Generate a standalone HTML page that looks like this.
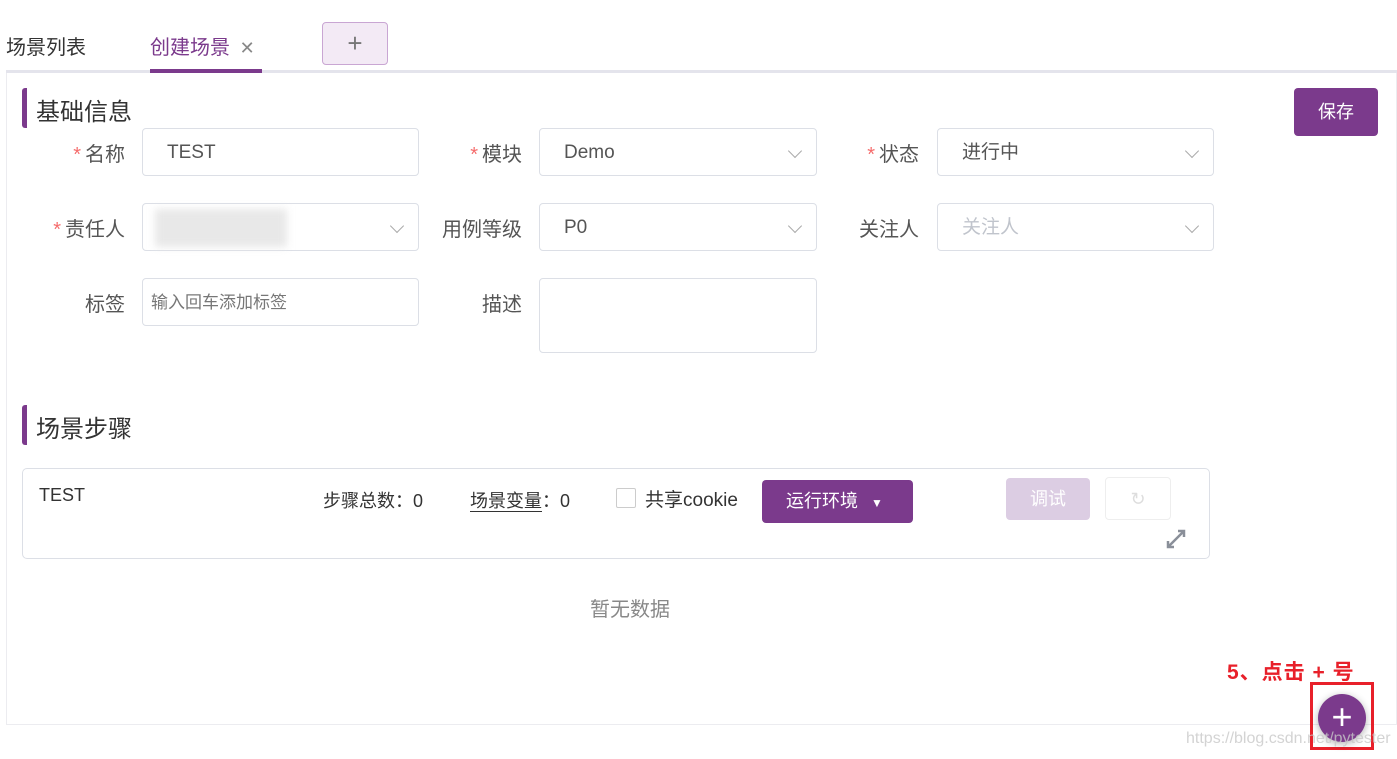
<!DOCTYPE html>
<html><head><meta charset="utf-8"><style>
*{box-sizing:border-box;margin:0;padding:0}
body{width:1397px;height:759px;background:#fff;font-family:"Liberation Sans","Noto Sans CJK SC",sans-serif;color:#333;position:relative;overflow:hidden}
.a{position:absolute}
.inp{position:absolute;border:1px solid #dcdfe6;border-radius:4px;height:48px;font-size:19px;padding:0 24px;line-height:48px;color:#555;background:#fff}
.lab{position:absolute;font-size:20px;color:#555;text-align:right;width:120px}
.lab i{color:#f56c6c;font-style:normal;margin-right:4px}
.chev{position:absolute;right:16px;top:17px;width:10px;height:10px;border-right:1.5px solid #aaa;border-bottom:1.5px solid #aaa;transform:rotate(45deg)}
</style></head><body>
<div class="a" style="left:6px;top:31px;font-size:20px;color:#333">场景列表</div>
<div class="a" style="left:150px;top:31px;font-size:20px;color:#7b3a8c">创建场景 <span style="color:#888;font-size:18px;margin-left:4px">✕</span></div>
<div class="a" style="left:322px;top:22px;width:66px;height:43px;border:1px solid #c9a6d3;border-radius:4px;background:#f3eaf5;text-align:center;line-height:40px;font-size:26px;color:#777">+</div>
<div class="a" style="left:6px;top:70px;width:1391px;height:3px;background:#e4e4ec"></div>
<div class="a" style="left:150px;top:69px;width:112px;height:4px;background:#7b3a8c"></div>
<div class="a" style="left:6px;top:73px;width:1391px;height:652px;border:1px solid #ececf0;border-top:none"></div>

<div class="a" style="left:22px;top:88px;width:5px;height:40px;background:#7b3a8c;border-radius:3px 0 0 3px"></div>
<div class="a" style="left:36px;top:92px;font-size:24px;color:#333">基础信息</div>
<div class="a" style="left:1294px;top:88px;width:84px;height:48px;background:#7b3a8c;border-radius:4px;color:#fff;font-size:18px;text-align:center;line-height:48px">保存</div>

<div class="lab" style="left:5px;top:138px"><i>*</i>名称</div>
<div class="inp" style="left:142px;top:128px;width:277px">TEST</div>
<div class="lab" style="left:402px;top:138px"><i>*</i>模块</div>
<div class="inp" style="left:539px;top:128px;width:278px">Demo<div class="chev"></div></div>
<div class="lab" style="left:799px;top:138px"><i>*</i>状态</div>
<div class="inp" style="left:937px;top:128px;width:277px">进行中<div class="chev"></div></div>

<div class="lab" style="left:5px;top:213px"><i>*</i>责任人</div>
<div class="inp" style="left:142px;top:203px;width:277px"><div class="a" style="left:12px;top:5px;width:132px;height:38px;background:#e8e8e8;filter:blur(4px)"></div><div class="chev"></div></div>
<div class="lab" style="left:402px;top:213px">用例等级</div>
<div class="inp" style="left:539px;top:203px;width:278px">P0<div class="chev"></div></div>
<div class="lab" style="left:799px;top:213px">关注人</div>
<div class="inp" style="left:937px;top:203px;width:277px;color:#c0c4cc">关注人<div class="chev"></div></div>

<div class="lab" style="left:5px;top:288px">标签</div>
<div class="inp" style="left:142px;top:278px;width:277px;font-size:17px;padding-left:8px;color:#777">输入回车添加标签</div>
<div class="lab" style="left:402px;top:288px">描述</div>
<div class="inp" style="left:539px;top:278px;width:278px;height:75px"></div>

<div class="a" style="left:22px;top:405px;width:5px;height:40px;background:#7b3a8c;border-radius:3px 0 0 3px"></div>
<div class="a" style="left:36px;top:409px;font-size:24px;color:#333">场景步骤</div>

<div class="a" style="left:22px;top:468px;width:1188px;height:91px;border:1px solid #dcdfe6;border-radius:5px"></div>
<div class="a" style="left:39px;top:485px;font-size:18px;color:#333">TEST</div>
<div class="a" style="left:323px;top:487px;font-size:18px;color:#333">步骤总数：0</div>
<div class="a" style="left:470px;top:487px;font-size:18px;color:#333"><span style="border-bottom:1px solid #333">场景变量</span>：0</div>
<div class="a" style="left:616px;top:488px;width:20px;height:20px;border:1px solid #ccc;border-radius:2px"></div>
<div class="a" style="left:645px;top:485px;font-size:19px;color:#333">共享cookie</div>
<div class="a" style="left:762px;top:480px;width:151px;height:43px;background:#7b3a8c;border-radius:4px;color:#fff;font-size:18px;line-height:43px;padding-left:24px">运行环境 <span style="font-size:12px;margin-left:8px">▼</span></div>
<div class="a" style="left:1006px;top:478px;width:84px;height:42px;background:#dccde3;border-radius:4px;color:#fff;font-size:18px;text-align:center;line-height:42px">调试</div>
<div class="a" style="left:1105px;top:477px;width:66px;height:43px;border:1px solid #eee;border-radius:4px;text-align:center;line-height:42px;color:#ddd;font-size:18px">↻</div>
<svg class="a" style="left:1165px;top:528px" width="22" height="22" viewBox="0 0 22 22"><path d="M3 19L19 3M13 3h6v6M3 13v6h6" stroke="#8a8f99" stroke-width="2.5" fill="none"/></svg>

<div class="a" style="left:590px;top:593px;font-size:20px;color:#888">暂无数据</div>

<div class="a" style="left:1227px;top:656px;font-size:21px;font-weight:bold;color:#e8202a;letter-spacing:1px">5、点击 + 号</div>
<div class="a" style="left:1310px;top:682px;width:64px;height:68px;border:3px solid #e8202a"></div>
<div class="a" style="left:1318px;top:694px;width:48px;height:48px;border-radius:50%;background:#7b3a8c;box-shadow:0 2px 8px rgba(0,0,0,.3);color:#fff;font-size:36px;text-align:center;line-height:46px">+</div>
<div class="a" style="left:1186px;top:730px;font-size:16px;color:rgba(200,200,200,.8)">https://blog.csdn.net/pytester</div>
</body></html>
